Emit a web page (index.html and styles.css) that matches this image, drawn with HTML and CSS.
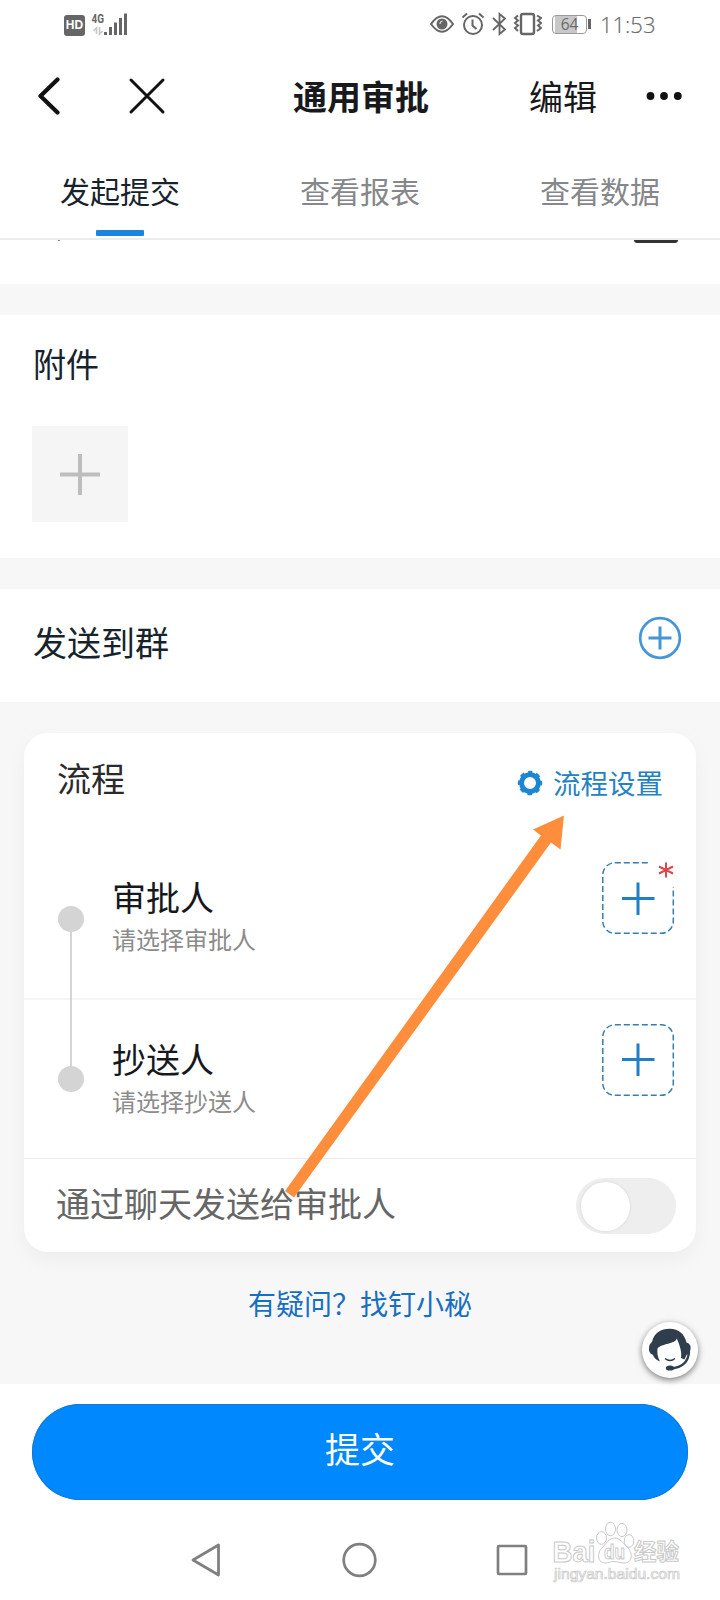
FILE: index.html
```html
<!DOCTYPE html>
<html lang="zh-CN">
<head>
<meta charset="utf-8">
<title>通用审批</title>
<link rel="stylesheet" href="styles.css">
</head>
<body>
<div class="phone">
  <header class="status">
    <span class="hd">HD</span>
    <svg class="signal" width="37" height="24" viewBox="91 12 37 24">
      <text x="91.5" y="23" class="net" textLength="12.5" lengthAdjust="spacingAndGlyphs">4G</text>
      <path d="M96.5 34V28L93.5 31M99.5 27V34L102.5 31" fill="none" stroke="#c6c6c6" stroke-width="1.6"/>
      <path d="M105.500 35V32M110.500 35V27M115.500 35V22.500M120.500 35V18M125.500 35V13.500" stroke="#666" stroke-width="3"/>
    </svg>
    <svg class="indicators" width="112" height="24" viewBox="430 12 112 24" fill="none" stroke="#666" stroke-width="2">
      <path d="M431 24Q442 8.500 453 24Q442 39.500 431 24Z"/>
      <circle cx="442" cy="24" r="5.500" fill="#666" stroke="none"/>
      <path d="M440 24Q440 21.500 442.500 21" stroke="#ddd" stroke-width="1.200"/>
      <circle cx="473" cy="25" r="9"/>
      <path d="M472.500 19.500V25.500L476.500 29M462.500 17.500L467 13.500M479 13.500L483.500 17.500"/>
      <path d="M493 18L505 29.500L499.500 34V14L505 18.500L493 30" stroke-width="1.800"/>
      <rect x="521" y="14" width="13" height="20" rx="2" stroke-width="2.400"/>
      <path d="M518 15.500L515 18L518 20.500L515 23L518 25.500L515 28L518 31M537 15.500L541 18L538 20.500L541 23L538 25.500L541 28L537 31" stroke-width="2"/>
    </svg>
    <span class="battery">64</span>
    <time class="clock">11:53</time>
  </header>

  <nav class="navbar">
    <svg class="back" width="24" height="40" viewBox="38 76 24 40"><path d="M57.500 79.500L40.500 96L57.500 112.500" fill="none" stroke="#111" stroke-width="4.200" stroke-linecap="round" stroke-linejoin="round"/></svg>
    <svg class="close" width="38" height="38" viewBox="128 77 38 38"><path d="M131 80L163 112M163 80L131 112" fill="none" stroke="#111" stroke-width="3" stroke-linecap="round"/></svg>
    <h1 class="title">通用审批</h1>
    <span class="edit">编辑</span>
    <svg class="more" width="36" height="10" viewBox="0 0 36 10" fill="#111"><circle cx="4.500" cy="5" r="3.900"/><circle cx="18" cy="5" r="3.900"/><circle cx="31.800" cy="5" r="3.900"/></svg>
  </nav>

  <div class="tabs">
    <div class="tab active">发起提交</div>
    <div class="tab">查看报表</div>
    <div class="tab">查看数据</div>
  </div>

  <main>
    <section class="clipped"><i class="clipped-speck"></i><i class="clipped-icon"></i></section>
    <section class="attach">
      <h2 class="label">附件</h2>
      <div class="upload"><svg width="40" height="41" viewBox="0 0 40 41"><path d="M0 20.500H40M20 0V41" stroke="#bdbdbd" stroke-width="4"/></svg></div>
    </section>
    <section class="group">
      <h2 class="label">发送到群</h2>
      <svg width="44" height="44" viewBox="0 0 44 44" fill="none" stroke="#4596d6"><circle cx="22" cy="22" r="19.800" stroke-width="2.700"/><path d="M10.500 22H33.500M22 10.500V33.500" stroke-width="3"/></svg>
    </section>

    <section class="flow">
      <div class="card">
        <div class="card-head">
          <h2 class="card-title">流程</h2>
          <div class="settings">
            <svg width="26" height="26" viewBox="-13 -13 26 26">
              <circle r="8.400" fill="none" stroke="#1b86d2" stroke-width="4.800"/>
              <circle r="11" fill="none" stroke="#1b86d2" stroke-width="2.400" stroke-dasharray="4.600 4.040" stroke-dashoffset="2.300" transform="rotate(-90)"/>
            </svg>
            <span>流程设置</span>
          </div>
        </div>
        <div class="step">
          <i class="dot dot-first"></i>
          <div class="step-text"><div class="step-name">审批人</div><div class="step-hint">请选择审批人</div></div>
          <svg class="add" width="74" height="74" viewBox="0 0 74 74" fill="none">
            <rect x="1.800" y="1.800" width="70.500" height="70.500" rx="12" stroke="#347fae" stroke-width="1.500" stroke-dasharray="6 3"/>
            <path d="M47 0H74V26H47Z" fill="#fff"/>
            <path d="M21 37.500H53.500M37 21.500V54" stroke="#237fc4" stroke-width="3"/>
            <path d="M65 1.500V16.500M58 5.500L72 12.500M72 5.500L58 12.500" stroke="#d9474d" stroke-width="2"/>
          </svg>
        </div>
        <div class="step step-cc">
          <i class="dot dot-last"></i>
          <div class="step-text"><div class="step-name">抄送人</div><div class="step-hint">请选择抄送人</div></div>
          <svg class="add" width="74" height="74" viewBox="0 0 74 74" fill="none">
            <rect x="1.800" y="1.800" width="70.500" height="70.500" rx="12" stroke="#347fae" stroke-width="1.500" stroke-dasharray="6 3"/>
            <path d="M21 36.500H53.500M37 20.500V53" stroke="#237fc4" stroke-width="3"/>
          </svg>
        </div>
        <div class="chat">
          <span class="chat-label">通过聊天发送给审批人</span>
          <div class="switch"><i class="knob"></i></div>
        </div>
      </div>
      <a class="help">有疑问？找钉小秘</a>
      <div class="service">
        <svg width="44" height="44" viewBox="0 0 44 44">
          <path d="M4 14C6 5 13 .8 21.500 .8C31 .8 37 7 38.500 14.500C42 15.500 43 18 42.500 21C42.300 24.500 40.500 26.500 38.500 27L36.500 31.500L33 30C34 24 32 18 28.800 10.500C27 16.500 14 15 9.500 20.500C9 25 9.500 29 12 33.500C8 32 6 30 5 27C1.500 25.500 .8 22.500 1 20C1.200 17 2 15.500 4 14Z" fill="#303d4c"/>
          <path d="M41 23.500C40.500 33 35 39.500 23 40.500" fill="none" stroke="#303d4c" stroke-width="2.400"/>
          <path d="M17 30.500Q22 34.500 27 30.500" fill="none" stroke="#303d4c" stroke-width="1.500"/>
          <ellipse cx="22" cy="40" rx="4.200" ry="2.600" fill="#303d4c"/>
        </svg>
      </div>
    </section>
  </main>

  <footer class="footer">
    <button class="submit">提交</button>
    <div class="softkeys">
      <svg width="32" height="36" viewBox="0 0 32 36"><path d="M3 18L28.500 3V33Z" fill="none" stroke="#808080" stroke-width="2.800" stroke-linejoin="round"/></svg>
      <svg width="36" height="36" viewBox="0 0 36 36"><circle cx="18.500" cy="18" r="15.800" fill="none" stroke="#808080" stroke-width="2.700"/></svg>
      <svg width="32" height="32" viewBox="0 0 32 32"><rect x="2" y="2" width="28" height="28" rx="1" fill="none" stroke="#808080" stroke-width="2.700"/></svg>
    </div>
  </footer>

  <svg class="arrow" width="290" height="390" viewBox="280 812 290 390"><path d="M564 815.500L533 829.500L541 835.500L285 1191L294 1197.500L551 842.500L560.500 849.500Z" fill="#ff8e3c"/></svg>

  <svg class="watermark" width="136" height="66" viewBox="548 1518 136 66">
    <g fill="#fff" stroke="#c9c9c9" stroke-width="1">
      <ellipse cx="601.500" cy="1538" rx="5" ry="6.300"/><ellipse cx="610.500" cy="1529" rx="5" ry="6.800"/><ellipse cx="622" cy="1530" rx="5" ry="6.600"/><ellipse cx="629" cy="1541" rx="4.800" ry="6.300"/>
      <path d="M614.500 1538C620 1538 623 1543 627 1547C633 1552 633 1563 624 1563C619 1563 618 1561.500 614 1561.500C610 1561.500 609 1563 605 1563C597 1563 597 1552 602 1548C606 1544 609 1538 614.500 1538Z"/>
    </g>
    <g class="mark">
      <text x="552.500" y="1562" font-size="29" font-weight="700" textLength="43" lengthAdjust="spacingAndGlyphs">Bai</text>
      <text x="604" y="1559" font-size="20" font-weight="700" textLength="21" lengthAdjust="spacingAndGlyphs">du</text>
      <text x="634" y="1560" font-size="23" font-weight="700" textLength="45" lengthAdjust="spacingAndGlyphs">经验</text>
      <text x="554" y="1579" font-size="14.500" stroke-width=".7" textLength="126" lengthAdjust="spacingAndGlyphs">jingyan.baidu.com</text>
    </g>
  </svg>
</div>
</body>
</html>
```

FILE: styles.css
```css
* { box-sizing: border-box; }
body {
  margin: 0;
  background: #fff;
  color: #17191d;
}
h1, h2 { margin: 0; font-weight: 400; }
svg { display: block; flex: none; }
.phone {
  position: relative;
  width: 720px;
  height: 1600px;
  overflow: hidden;
  display: flex;
  flex-direction: column;
  font-family: "Noto Sans CJK SC", sans-serif;
}

/* Status bar */
.status { height: 48px; padding: 0 65px 0 64px; display: flex; align-items: center; color: #6c6c6c; font-family: "Noto Sans", sans-serif; }
.hd { width: 21px; height: 21px; margin-top: 2px; border-radius: 3px; background: #666; color: #fff; font: 700 12px/21px "Liberation Sans", sans-serif; text-align: center; }
.signal { margin-left: 6px; }
.net { font: 700 12px Roboto, sans-serif; fill: #666; }
.indicators { margin-left: auto; }
.battery {
  position: relative;
  width: 35px; height: 19px;
  margin-left: 10px;
  border: 1.5px solid #999;
  border-radius: 4px;
  background: linear-gradient(90deg, #c8c8c8 22px, #fff 22px) 2px 0 no-repeat;
  font-family: "Open Sans", sans-serif;
  font-size: 15.5px; line-height: 16px; text-align: center;
}
.battery::after { content: ""; position: absolute; right: -5px; top: 3px; width: 3px; height: 10px; background: #666; }
.clock { margin-left: 13px; width: 55px; font-family: "Open Sans", "Noto Sans", sans-serif; font-weight: 300; font-size: 22px; line-height: 30px; -webkit-text-stroke: .2px #6c6c6c; white-space: nowrap; }

/* Navigation bar */
.navbar { height: 96px; padding: 0 38px; display: flex; align-items: center; }
.close { margin-left: 66px; }
.title { margin-left: 127px; width: 136px; font-size: 34px; line-height: 48px; font-weight: 700; white-space: nowrap; }
.edit { margin-left: 100px; font-size: 34px; line-height: 48px; }
.more { margin-left: auto; }

/* Tabs */
.tabs { height: 96px; display: flex; border-bottom: 2px solid #ececec; }
.tab { position: relative; flex: 1; padding-top: 24px; text-align: center; font-size: 30px; line-height: 44px; color: #85878a; }
.tab.active { color: #17232c; }
.tab.active::after { content: ""; position: absolute; left: 96px; bottom: 2px; width: 48px; height: 6px; border-radius: 1px; background: #1b84df; }

/* Form sections */
main { background: #f7f7f7; height: 1144px; }
.clipped { height: 44px; background: #fff; display: flex; justify-content: space-between; padding: 0 42px 0 58px; margin-bottom: 31px; }
.clipped-speck { width: 2px; height: 1px; background: #888; }
.clipped-icon { width: 44px; height: 3px; border-radius: 0 0 4px 4px; background: #333; }
.label { font-size: 34px; line-height: 48px; color: #17232c; }
.attach { height: 243px; background: #fff; padding: 24px 33px 0; margin-bottom: 31px; }
.attach .label { font-size: 33px; }
.upload { margin: 39px 0 0 -1px; width: 96px; height: 96px; background: #f5f5f5; display: grid; place-items: center; }
.group { height: 113px; background: #fff; padding: 16px 38px 19px 33px; display: flex; justify-content: space-between; }
.group .label { padding-top: 13px; }
.group svg { margin-top: 11px; }

/* Approval flow */
.flow { position: relative; padding: 31px 24px 0; height: 682px; text-align: center; }
.card { height: 519px; border-radius: 24px; background: #fff; box-shadow: 0 8px 20px rgba(0, 0, 0, .045); text-align: left; }
.card-head { height: 107px; padding: 21px 33px 0 33px; display: flex; justify-content: space-between; }
.card-title { font-size: 34px; line-height: 48px; color: #292a2c; }
.settings { display: flex; align-items: center; gap: 10px; height: 40px; margin-top: 9px; color: #2382c4; font-size: 27.5px; line-height: 40px; }
.settings span { margin-top: -2px; }
.step { position: relative; height: 160px; padding: 21px 21px 0 88px; display: flex; justify-content: space-between; border-bottom: 2px solid #f5f5f5; }
.step-cc { height: 159px; padding-top: 23px; border-bottom-width: 1px; border-color: #eaeaea; }
.step-text { padding-top: 12px; }
.step-name { font-size: 34px; line-height: 48px; color: #16181d; }
.step-hint { font-size: 24px; line-height: 36px; color: #8b8b8b; }
.dot { position: absolute; z-index: 1; left: 34px; top: 66px; width: 26px; height: 26px; border-radius: 50%; background: #d4d4d4; }
.dot-first::after { content: ""; position: absolute; left: 12px; top: 25px; width: 2px; height: 136px; background: #d4d4d4; }
.chat { height: 93px; padding: 0 20px 0 32px; display: flex; align-items: center; justify-content: space-between; font-size: 34px; line-height: 48px; color: #666; }
.chat-label { padding-bottom: 5px; }
.switch { width: 100px; height: 56px; border-radius: 28px; background: #eee; padding: 4px 5px; }
.knob { display: block; width: 49px; height: 49px; border-radius: 50%; background: #fff; box-shadow: 0 0 2px 1px #e0e0e0; }
.help { display: block; margin-top: 31px; font-size: 28px; line-height: 40px; color: #176fc0; }
.service { position: absolute; left: 642px; top: 620px; width: 56px; height: 56px; border-radius: 50%; background: #fff; box-shadow: 0 2px 6px rgba(0, 0, 0, .5); display: grid; place-items: center; }

/* Footer */
.footer { height: 216px; padding: 20px 32px 0; background: #fff; }
.submit { display: block; width: 100%; height: 96px; padding: 0 0 9px; border: 0; border-radius: 48px; background: #0088ff; box-shadow: inset 0 0 0 1px #127bd5; color: #fff; font: 400 35px/48px "Noto Sans CJK SC", sans-serif; }
.softkeys { height: 36px; margin: 42px 160px 0 158px; display: flex; align-items: center; justify-content: space-between; }

/* Overlays */
.arrow { position: absolute; left: 280px; top: 812px; z-index: 2; }
.watermark { position: absolute; left: 548px; top: 1518px; }
.mark { font-family: "Liberation Sans", "Noto Sans CJK SC", sans-serif; fill: #fff; stroke: #c9c9c9; stroke-width: 1; }
```
